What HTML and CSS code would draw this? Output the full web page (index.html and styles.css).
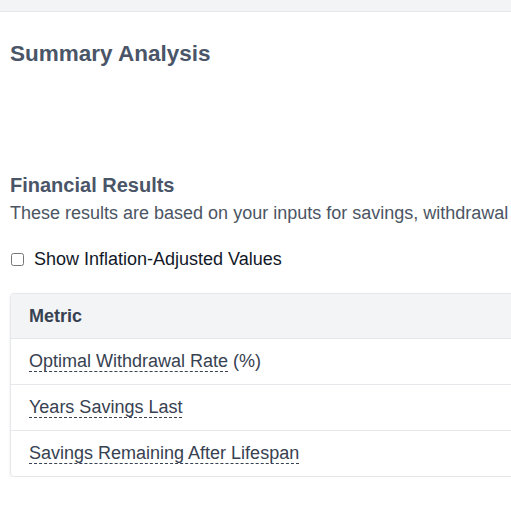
FILE: index.html
```html
<!DOCTYPE html>
<html lang="en">
<head>
<meta charset="utf-8">
<title>Summary Analysis</title>
<link rel="stylesheet" href="styles.css">
</head>
<body>
<div class="topbar"></div>
<main class="page">
  <h1 class="title">Summary Analysis</h1>
  <section class="results">
    <h2 class="subtitle">Financial Results</h2>
    <p class="desc">These results are based on your inputs for savings, withdrawal rate, and lifespan.</p>
    <label class="toggle"><input type="checkbox" class="check"> Show Inflation-Adjusted Values</label>
    <div class="table-wrap">
      <table class="table">
        <thead>
          <tr><th>Metric</th></tr>
        </thead>
        <tbody>
          <tr><td><span class="term">Optimal Withdrawal Rate</span> (%)</td></tr>
          <tr><td><span class="term">Years Savings Last</span></td></tr>
          <tr><td><span class="term">Savings Remaining After Lifespan</span></td></tr>
        </tbody>
      </table>
    </div>
  </section>
</main>
</body>
</html>
```

FILE: styles.css
```css
html, body {
  margin: 0;
  padding: 0;
  overflow: hidden;
  background: #ffffff;
  font-family: "Liberation Sans", Arial, sans-serif;
}
.topbar {
  height: 11px;
  background: #f3f4f6;
  border-bottom: 1px solid #e5e7eb;
}
.page {
  width: 900px;
  padding: 0 10px;
}
.title {
  margin: 28px 0 0;
  font-size: 22.5px;
  line-height: 28px;
  font-weight: 700;
  color: #4a5568;
}
.results {
  margin-top: 104px;
}
.subtitle {
  margin: 0;
  font-size: 20px;
  line-height: 26px;
  font-weight: 700;
  color: #4a5568;
}
.desc {
  margin: 3px 0 0;
  font-size: 18px;
  line-height: 24px;
  color: #4b5563;
  white-space: nowrap;
}
.toggle {
  display: flex;
  align-items: center;
  margin-top: 22px;
  font-size: 18px;
  line-height: 24px;
  color: #111827;
}
.check {
  margin: 0 10px 0 1px;
  width: 13px;
  height: 13px;
}
.table-wrap {
  margin-top: 22px;
  border: 1px solid #e5e7eb;
  border-radius: 4px;
  box-shadow: 0 1px 3px rgba(0,0,0,0.08);
  overflow: hidden;
}
.table {
  width: 100%;
  border-collapse: collapse;
}
.table th {
  text-align: left;
  background: #f3f4f6;
  color: #374151;
  font-size: 18px;
  font-weight: 700;
  padding: 11px 18px;
  line-height: 22px;
}
.table td {
  padding: 11px 18px;
  font-size: 18px;
  line-height: 23px;
  color: #374151;
  border-top: 1px solid #e5e7eb;
}
.term {
  border-bottom: 1px dashed #374151;
}
```
